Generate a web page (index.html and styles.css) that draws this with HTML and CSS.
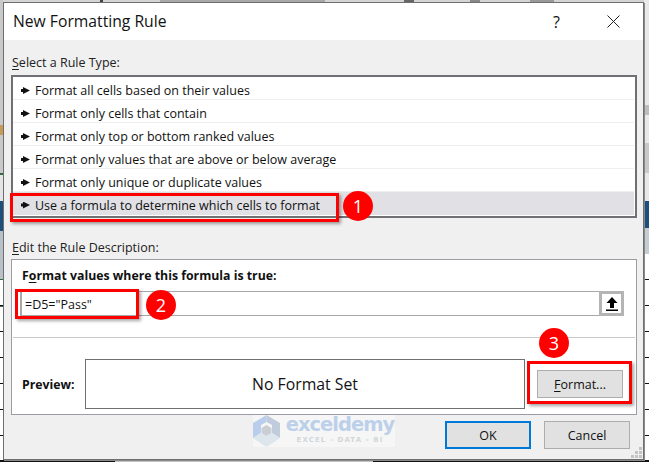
FILE: index.html
```html
<!DOCTYPE html>
<html lang="en">
<head>
    <meta charset="UTF-8">
    <title>New Formatting Rule</title>
    <link rel="stylesheet" href="styles.css">
</head>
<body>
    <!-- bits of the sheet that show round the dialog -->
    <div class="sheet sheet-top"></div>
    <div class="sheet sheet-left">
        <i class="bit bit-a"></i><i class="bit bit-o"></i><i class="bit bit-b"></i><i class="bit bit-c"></i><i class="bit bit-d"></i><i class="bit bit-l1"></i><i class="bit bit-l2"></i>
    </div>
    <div class="sheet sheet-right">
        <i class="bit bit-e"></i><i class="bit bit-h"></i><i class="bit bit-f"></i><i class="bit bit-g"></i><i class="bit bit-t"></i>
    </div>
    <div class="sheet sheet-bottom"></div>

    <div class="dialog">
        <div class="titlebar">
            <span class="title">New Formatting Rule</span>
            <span class="help">?</span>
            <svg class="close" width="13" height="13" viewBox="0 0 13 13"><path d="M.5.5l12 12M12.5.5l-12 12" stroke="#222" fill="none"/></svg>
        </div>
        <div class="content">
            <div class="label"><u>S</u>elect a Rule Type:</div>
            <ul class="rules">
                <li><i class="arrow"></i>Format all cells based on their values</li>
                <li><i class="arrow"></i>Format only cells that contain</li>
                <li><i class="arrow"></i>Format only top or bottom ranked values</li>
                <li><i class="arrow"></i>Format only values that are above or below average</li>
                <li><i class="arrow"></i>Format only unique or duplicate values</li>
                <li class="selected"><i class="arrow"></i>Use a formula to determine which cells to format</li>
            </ul>
            <div class="label label-edit"><u>E</u>dit the Rule Description:</div>
            <div class="desc">
                <div class="desc-title">F<u>o</u>rmat values where this formula is true:</div>
                <div class="formula">
                    <span class="formula-text">=D5="Pass"</span>
                    <span class="collapse">
                        <svg width="14" height="16" viewBox="0 0 14 16"><path d="M7 1L1.500 7H5v5h4V7h3.500zM1 13.500h12V15H1z" fill="#000"/></svg>
                    </span>
                </div>
                <div class="preview-row">
                    <b class="preview-label">Preview:</b>
                    <div class="preview">No Format Set</div>
                    <button class="btn btn-format"><u>F</u>ormat...</button>
                </div>
            </div>
            <div class="actions">
                <button class="btn btn-ok">OK</button>
                <button class="btn">Cancel</button>
            </div>
        </div>
        <svg class="grip" width="11" height="11" viewBox="0 0 11 11"><path d="M8 0h3v3H8zM4 4h3v3H4zM8 4h3v3H8zM0 8h3v3H0zM4 8h3v3H4zM8 8h3v3H8z" fill="#c4c4c4"/></svg>
    </div>

    <!-- annotations on top of the screenshot -->
    <div class="mark mark-1"></div>
    <div class="mark mark-2"></div>
    <div class="mark mark-3"></div>
    <div class="num num-1">1</div>
    <div class="num num-2">2</div>
    <div class="num num-3">3</div>

    <div class="watermark">
        <svg class="wm-logo" width="27" height="32" viewBox="0 0 27 32">
            <path d="M13.500 0L0 8v15l8-5v-8l5.500-3z" fill="#b9cdec"/>
            <path d="M13.500 0L27 8v15l-8-5v-8l-5.500-3z" fill="#c0cbdc"/>
            <path d="M13.500 10l5 3v5l-5 3-5-3v-5z" fill="#c9ced4"/>
            <path d="M0 23l13.500 9L27 23l-8-5-5.500 3-5.500-3z" fill="#dde6ec"/>
        </svg>
        <div class="wm-text">
            <div class="wm-name">exceldemy</div>
            <div class="wm-sub">EXCEL - DATA - BI</div>
        </div>
    </div>
</body>
</html>
```

FILE: styles.css
```css
* {
    margin: 0;
    padding: 0;
    box-sizing: border-box;
}
html, body {
    width: 649px;
    height: 462px;
    overflow: hidden;
}
body {
    position: relative;
    background: #d4d4d4;
    font-family: "Open Sans", "Liberation Sans", sans-serif;
    font-size: 12.500px;
    color: #111;
    padding: 2px 5px 3px 3px;
}
u {
    text-underline-offset: 2px;
}

/* sheet behind the dialog */
.sheet {
    position: absolute;
}
.sheet-top {
    left: 0;
    top: 0;
    width: 649px;
    height: 2px;
    background: linear-gradient(90deg, #d4d4d4 0 100px, #444 100px 103px, #d4d4d4 103px 160px, #a8a8a8 160px 325px, #d4d4d4 325px 404px, #666 404px 414px, #d4d4d4 414px 470px, #888 470px 480px, #d4d4d4 480px 530px, #999 530px 554px, #d4d4d4 554px);
}
.sheet-left {
    left: 0;
    top: 0;
    width: 3px;
    height: 462px;
    background: repeating-linear-gradient(#fff 0 19px, #111 19px 20px, #fff 20px 26px);
}
.sheet-right {
    right: 0;
    top: 0;
    width: 5px;
    height: 462px;
    background: repeating-linear-gradient(#fff 0 19px, #111 19px 20px, #fff 20px 26px);
}
.sheet-bottom {
    left: 0;
    top: 460px;
    width: 649px;
    height: 2px;
    background: linear-gradient(90deg, #111 0 115px, #c4c4c4 115px 373px, #111 373px);
}
.bit {
    position: absolute;
    left: 0;
    width: 100%;
    display: block;
}
.bit-a {
    top: 0;
    height: 173px;
    background: #c9c9c9;
}
.bit-o {
    top: 125px;
    height: 10px;
    background: #c89a58;
}
.bit-b {
    top: 173px;
    height: 28px;
    background: #e4e4e4;
    border-top: 2px solid #2f6b45;
}
.bit-c {
    top: 201px;
    height: 30px;
    background: #1d4f7c;
}
.bit-d {
    top: 231px;
    height: 48px;
    background: #b8c0c8;
}
.bit-l1 {
    top: 279px;
    height: 1px;
    background: #2f6b45;
}
.bit-l2 {
    top: 306px;
    height: 1px;
    background: #2f6b45;
}
.bit-e {
    top: 0;
    height: 201px;
    background: #e8e8e8;
}
.bit-h {
    top: 105px;
    height: 10px;
    background: #bdbdbd;
}
.bit-f {
    top: 201px;
    height: 27px;
    background: #1d4f7c;
}
.bit-g {
    top: 228px;
    height: 26px;
    background: #c4ccd4;
}
.bit-t {
    top: 143px;
    height: 30px;
    background: #c9c9c9;
}

/* dialog */
.dialog {
    position: relative;
    width: 641px;
    height: 458px;
    background: #f0f0f0;
    border: 1px solid #6e6e6e;
    box-shadow: 1px 1px 0 #8a8a8a;
}
.titlebar {
    height: 37px;
    background: #fff;
    display: flex;
    align-items: center;
    padding: 0 23px 0 9px;
}
.title {
    font-size: 15.700px;
    line-height: 34px;
    height: 36px;
    flex: 1;
}
.help {
    font-size: 16px;
    margin-right: 47px;
}
.content {
    padding: 0 7px;
}
.label {
    height: 35px;
    padding: 14px 0 0 1px;
    line-height: 17px;
    color: #222;
}
.rules {
    list-style: none;
    width: 626px;
    height: 143px;
    border: 2px solid #6f6f74;
    background: #fff;
    padding-right: 1px;
}
.rules li {
    height: 23px;
    padding-top: 5px;
    display: flex;
    align-items: center;
    border-bottom: 1px solid #eee;
}
.rules .selected {
    padding-top: 3px;
    background: #e0e0e5;
    border-bottom: 0;
}
.arrow {
    width: 9px;
    height: 7px;
    margin: 0 5px 0 8px;
    background: #111;
    clip-path: polygon(0 30%, 22% 30%, 22% 0, 100% 50%, 22% 100%, 22% 70%, 0 70%);
}
.label-edit {
    height: 41px;
    padding-top: 21px;
}
.desc {
    width: 626px;
    height: 156px;
    background: #fff;
    border: 1px solid #9c9ca2;
}
.desc-title {
    font-weight: 700;
    font-size: 12.300px;
    padding: 7px 0 0 10px;
    height: 31px;
    line-height: 17px;
}
.formula {
    display: flex;
    align-items: center;
    justify-content: space-between;
    margin-left: 8px;
    width: 604px;
    height: 25px;
    border: 1px solid #a8a8a8;
    border-left-width: 2px;
    border-right: 0;
}
.formula-text {
    padding: 2px 0 0 3px;
}
.collapse {
    width: 25px;
    height: 25px;
    margin: -1px 0;
    border: 3px solid #b4b4b4;
    display: flex;
    align-items: center;
    justify-content: center;
}
.preview-row {
    display: flex;
    align-items: center;
    margin: 21px 1px 0;
    padding: 21px 0 0 9px;
    border-top: 1px solid #c8c8c8;
}
.preview-label {
    width: 63px;
    font-size: 12.300px;
}
.preview {
    width: 440px;
    height: 50px;
    border: 1px solid #707070;
    display: flex;
    align-items: center;
    justify-content: center;
    font-size: 15.800px;
}
.btn {
    width: 86px;
    height: 28px;
    background: #e1e1e1;
    border: 1px solid #adadad;
    font-family: inherit;
    font-size: 12.500px;
    color: #111;
}
.btn-format {
    margin-left: 12px;
}
.actions {
    display: flex;
    justify-content: flex-end;
    gap: 13px;
    padding: 6px 6px 0 0;
}
.btn-ok {
    border: 2px solid #0078d7;
}
.grip {
    position: absolute;
    right: 1px;
    bottom: 1px;
}

/* red annotations */
.mark {
    position: absolute;
    border: 3px solid #f00;
    box-shadow: 2px 2px 3px rgba(0, 0, 0, .35);
}
.mark-1 {
    left: 10px;
    top: 193px;
    width: 329px;
    height: 29px;
}
.mark-2 {
    left: 15px;
    top: 289px;
    width: 124px;
    height: 30px;
}
.mark-3 {
    left: 527px;
    top: 361px;
    width: 105px;
    height: 43px;
}
.num {
    position: absolute;
    width: 30px;
    height: 30px;
    border-radius: 50%;
    background: #f00;
    color: #fff;
    font-size: 18px;
    line-height: 30px;
    text-align: center;
}
.num-1 {
    left: 343px;
    top: 191px;
}
.num-2 {
    left: 146px;
    top: 290px;
}
.num-3 {
    left: 539px;
    top: 328px;
}

/* logo stamped over the dialog */
.watermark {
    position: absolute;
    left: 253px;
    top: 415px;
    width: 142px;
    height: 32px;
    display: flex;
    gap: 5px;
    background: rgba(255, 255, 255, .4);
}
.wm-logo {
    flex-shrink: 0;
}
.wm-text {
    flex: 1;
    text-align: center;
    white-space: nowrap;
}
.wm-name {
    font-family: "DejaVu Sans", sans-serif;
    font-weight: 700;
    font-size: 19.500px;
    letter-spacing: -1px;
    line-height: 22px;
    margin-top: -1px;
    color: #bcd0ea;
}
.wm-sub {
    font-family: "DejaVu Sans", sans-serif;
    font-weight: 700;
    font-size: 7px;
    line-height: 8px;
    letter-spacing: 1.100px;
    color: #d2d6da;
}
```
